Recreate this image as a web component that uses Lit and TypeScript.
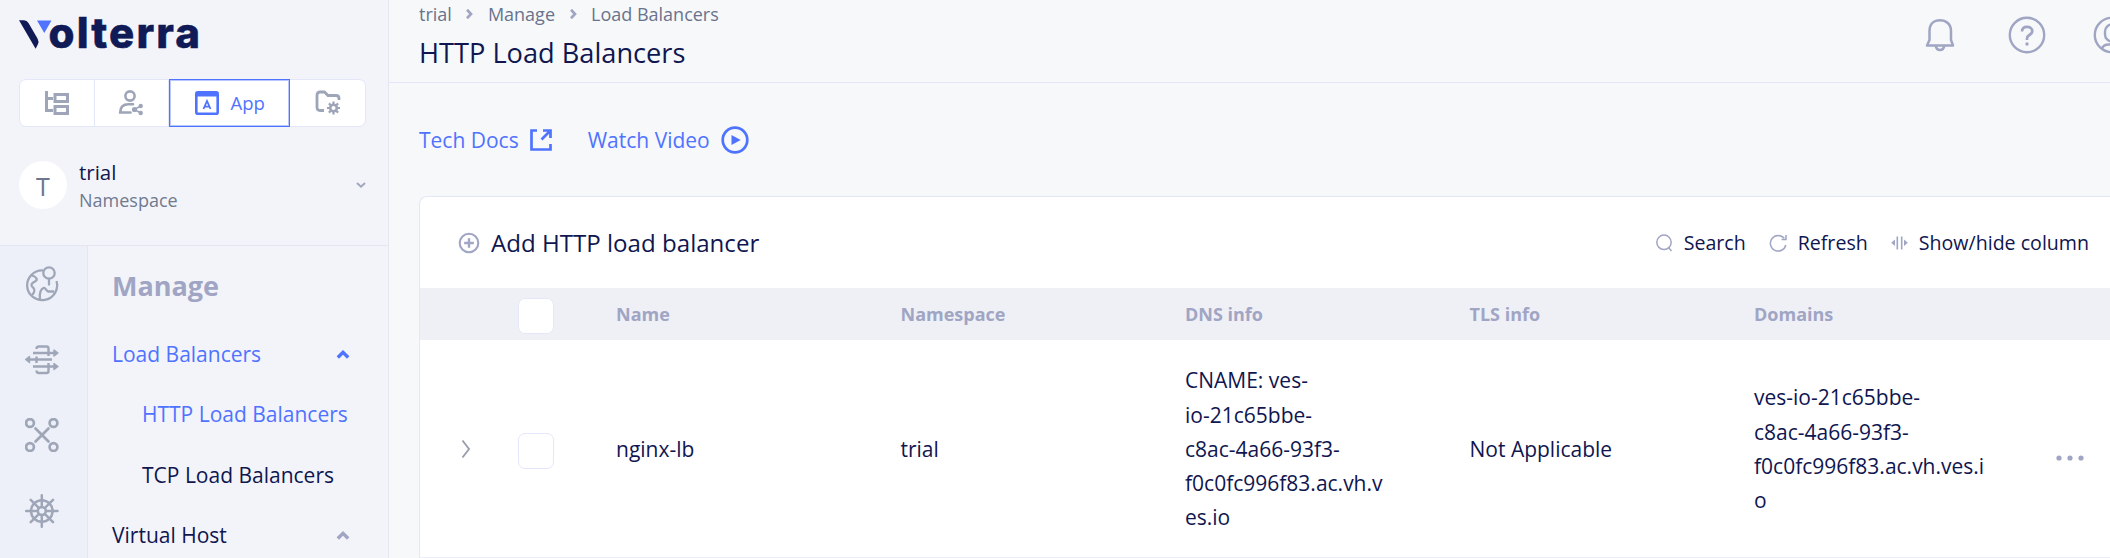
import { LitElement, html, css, svg } from "lit";
import { customElement } from "lit/decorators.js";

const icon = (w: number, h: number, body: unknown, cls = "") =>
  html`<svg class="ic ${cls}" width=${w} height=${h} viewBox="0 0 ${w} ${h}" fill="none" stroke="currentColor">${body}</svg>`;

const logo = html`<svg class="logo" width="184" height="36" viewBox="0 0 184 36">
  <path d="M0 4.300H5Q8 4.300 9.500 7L18.500 22.500Q20.300 25.500 18.800 28.500L16.600 32.800Z" fill="#101a56"></path>
  <path d="M18 4.500H32.500L25.300 17Z" fill="#4f73ff"></path>
  <text x="29.500" y="32" textLength="151.500" lengthAdjust="spacing" font-family="Inter, sans-serif" font-weight="800" font-size="42" fill="#101a56" stroke="#101a56" stroke-width="0.500">olterra</text>
</svg>`;

const icons = {
  tree: icon(26, 26, svg`<g stroke-width="3"><path d="M2.500 1V20.500H9M2.500 8.500H9"/><rect x="11" y="4.500" width="12.500" height="7"/><rect x="11" y="16.500" width="12.500" height="7"/></g>`),
  user: icon(26, 26, svg`<g stroke-width="2.600"><circle cx="12" cy="6" r="4.600"/><path d="M12.500 22.500H2.200C2.200 16.500 6 14.300 10.500 14.300H15" stroke-linecap="round"/><path d="M16 19.500L23 16M16 19.500L23 23" stroke-width="1.500"/></g><g fill="currentColor" stroke="none"><circle cx="16.500" cy="19.500" r="2.600"/><circle cx="22.700" cy="16" r="2.200"/><circle cx="22.700" cy="23" r="2.200"/></g>`),
  app: icon(24, 24, svg`<rect x="1.300" y="1.300" width="21.400" height="21.400" rx="1.500" stroke-width="2.600"/><path d="M1 3.500H23" stroke-width="4"/><path d="M8.500 18L12 10L15.500 18M9.800 15.700H14.200" stroke-width="1.800"/>`),
  folder: icon(26, 26, svg`<path d="M9 20.500H5Q2 20.500 2 17.500V5Q2 2 5 2H9.500L13 5.500H21Q24 5.500 24 8.500V10" stroke-width="2.800"/><circle cx="18.500" cy="18" r="3.300" stroke-width="2.600"/><path d="M18.500 11.500V14M18.500 22V24.500M12 18H14.500M22.500 18H25M13.900 13.400L15.700 15.200M21.300 20.800L23.100 22.600M23.100 13.400L21.300 15.200M15.700 20.800L13.900 22.600" stroke-width="2.200"/>`),
  globe: icon(34, 36, svg`<g stroke-width="2.300"><path d="M18 4.500A15 14.800 0 1 0 31.500 15"/><circle cx="24" cy="7" r="5.700"/><path d="M24 13V18.500" stroke-linecap="round"/><path d="M7 9.500C12 11 13 14 10 15.500C5 18 6 20 8.500 22C10.500 24 9 27 7 29"/><path d="M15 33C14 27 16 23 18.500 22C21 21.500 21 25 23.500 25.500H29"/></g>`),
  arrows: icon(34, 30, svg`<g stroke-width="2.400"><path d="M11.500 4Q11.500 1.500 14 1.500H21.500Q23.500 1.500 23.500 3.500V11M8 8H29M5 14.500H27M8 21.500H29M23.500 18V26Q23.500 28 21.500 28H14Q11.500 28 11.500 25.500M11.500 11.500V18"/></g><g fill="currentColor" stroke-width="1.400" stroke-linejoin="round"><path d="M29 5L33 8L29 11Z"/><path d="M29 18.500L33 21.500L29 24.500Z"/><path d="M4.500 11.500L.700 14.500L4.500 17.500Z"/></g>`),
  mesh: icon(34, 34, svg`<g stroke-width="2.700"><circle cx="5" cy="5" r="3.900"/><circle cx="28.500" cy="5" r="3.900"/><circle cx="5" cy="29" r="3.900"/><circle cx="28.500" cy="29" r="3.900"/><path d="M10.500 10.500L23.500 23.500M23.500 10.500L10.500 23.500" stroke-linecap="round"/></g>`),
  helm: icon(34, 34, svg`<g stroke-width="2.500" stroke-linecap="round"><circle cx="16.800" cy="17" r="10.800"/><circle cx="16.800" cy="17" r="4"/><path d="M16.800 1.200V13M16.800 21V32.800M1.200 17H13M21 17H32.500M5.700 5.900L14 14.200M19.700 19.900L28 28.200M28 5.900L19.700 14.200M14 19.900L5.700 28.200"/></g>`),
  chevUp: icon(14, 10, svg`<path d="M1.800 8.500L7 3.300L12.200 8.500" stroke-width="3.400"/>`),
  chevDown: icon(10, 8, svg`<path d="M1 2L5 5.800L9 2" stroke-width="1.900"/>`),
  crumb: icon(7, 10, svg`<path d="M1 .8L5 5L1 9.200" stroke-width="2.700"/>`),
  ext: icon(22, 22, svg`<path d="M7 1.500H1.500V20.500H20.500V15" stroke-width="2.700"/><path d="M11.500 10.500L19.500 2.500M13 1.500H20.500V9" stroke-width="2.700"/>`),
  play: icon(28, 28, svg`<circle cx="14" cy="14" r="12.300" stroke-width="2.700"/><path d="M10.500 9L19.700 14L10.500 19Z" fill="currentColor" stroke="none"/>`),
  plus: icon(22, 22, svg`<circle cx="11" cy="11" r="9.300" stroke-width="2.100"/><path d="M11 6.200V15.800M6.200 11H15.800" stroke-width="2.400"/>`),
  search: icon(17, 18, svg`<circle cx="8" cy="8.300" r="7.200" stroke-width="1.500"/><path d="M12.500 13.500L15.500 17" stroke-width="1.500"/>`),
  refresh: icon(18, 18, svg`<path d="M15.200 4.300A7.800 7.800 0 1 0 16.800 11" stroke-width="1.500"/><path d="M17 1V5.500H12.500" stroke-width="1.500"/>`),
  cols: icon(17, 14, svg`<g stroke-width="1.600"><path d="M6.300 .5V13.500M10.700 .5V13.500"/></g><g fill="currentColor" stroke="none"><path d="M4 3.500V10L.200 6.800Z"/><path d="M13 3.500V10L16.800 6.800Z"/></g>`),
  bell: icon(30, 34, svg`<g stroke-width="2.500" stroke-linejoin="round"><path d="M2 27.500H28L26 22V13C26 6 21 2.300 15 2.300S4.500 6 4.500 13V22Z"/><path d="M10.800 28C11.500 33.200 18.500 33.200 19.200 28"/></g>`, "bell"),
  help: icon(38, 38, svg`<circle cx="19" cy="19" r="17.200" stroke-width="2.400"/><path d="M14 15.500C14.200 12.300 16.200 10.900 19 10.900C22 10.900 24.300 12.600 24.300 15.300C24.300 19 19 18.500 19 22.500V24" stroke-width="2.700"/><circle cx="19" cy="28" r="1.700" fill="currentColor" stroke="none"/>`, "help"),
  person: icon(38, 38, svg`<circle cx="19" cy="19" r="17.200" stroke-width="2.400"/><rect x="12" y="8.500" width="14" height="17" rx="7" stroke-width="2.400"/><path d="M9 33C9.500 30 12 28.800 15 28.500H23C26 28.800 28.500 30 29 33" stroke-width="2.400"/>`),
  next: icon(10, 20, svg`<path d="M1.500 1.500L8 10L1.500 18.500" stroke-width="1.900"/>`),
  dots: icon(28, 6, svg`<g fill="currentColor" stroke="none"><circle cx="3" cy="3" r="2.600"/><circle cx="14" cy="3" r="2.600"/><circle cx="25" cy="3" r="2.600"/></g>`),
};

@customElement("app-root")
export class AppRoot extends LitElement {
  static styles = css`
    :host { display: grid; grid-template-columns: 388px 1fr; width: 2110px; height: 558px; overflow: hidden; background: #f7f8fa; color: #0f1650; font: 21px/34.300px "Open Sans", sans-serif; }
    * { box-sizing: border-box; }
    svg { display: block; flex: none; }
    .logo { overflow: visible; }
    .side { display: flex; flex-direction: column; background: #f3f4f9; border-right: 1px solid #e4e6f2; width: 389px; height: 558px; }
    .top { height: 245px; padding: 16px 22px 0 19px; flex: none; }
    .tabs { display: flex; margin-top: 27px; height: 48px; background: #fff; border: 1px solid #e4e7f7; border-radius: 7px; color: #9ea5b8; }
    .tab { display: flex; align-items: center; justify-content: center; width: 75px; border-right: 1px solid #e4e7f7; }
    .tab:last-child { border: 0; }
    .tab.on { width: 122px; margin: -1px 0; border: 1px solid #4f73ff; box-shadow: inset 0 0 0 1px #4f73ff66; color: #4f73ff; gap: 12px; font-size: 18.500px; }
    .ns { display: flex; align-items: center; margin-top: 30px; height: 56px; color: #a0a6bb; }
    .av { width: 48px; height: 48px; border-radius: 50%; background: #fff; color: #6c7690; font-size: 25px; line-height: 50px; text-align: center; margin-right: 12px; }
    .nst { flex: 1; padding-top: 2px; font-size: 20.500px; line-height: 28px; color: #0f1650; }
    .nst small { display: block; font-size: 18px; color: #6f7a91; }
    .body { display: flex; flex: 1; border-top: 1px solid #e4e6f2; }
    .rail { width: 88px; background: #edf0f8; border-right: 1px solid #e4e6f2; display: flex; flex-direction: column; align-items: center; color: #9ea6b8; padding-right: 4px; }
    .rail .cell { flex: none; height: 75.700px; display: flex; align-items: center; }
    .nav { flex: 1; padding: 23px 38px 0 24px; white-space: nowrap; }
    h2 { margin: 0 0 21px; font-size: 27px; line-height: 34px; color: #a0a5c4; }
    .item { display: flex; justify-content: space-between; align-items: center; height: 60.300px; }
    .item.sub { padding-left: 30px; }
    .blue { color: #4f73ff; }
    .mut { color: #a0a5c4; }
    .main { min-width: 0; display: flex; flex-direction: column; }
    .head { display: flex; justify-content: space-between; height: 83px; flex: none; border-bottom: 1px solid #e4e5f8; padding-left: 30px; margin-left: 1px; }
    .crumbs { display: flex; align-items: center; height: 28px; font-size: 18px; color: #69738c; }
    .crumbs svg { margin: 0 14.500px; color: #a0a5c4; }
    h1 { margin: 6px 0 0; font-size: 27.200px; line-height: 38px; font-weight: 400; }
    .acts { display: flex; align-items: center; height: 69px; color: #a0a5c4; width: 185.200px; }
    .bell { margin-right: 53.500px; }
    .help { margin-right: 46.500px; }
    .links { display: flex; align-items: center; height: 113px; padding: 1px 0 0 31px; color: #4f73ff; }
    .links svg { margin: 0 36px 0 11px; }
    .card { flex: 1; margin-left: 31px; background: #fff; border: 1px solid #e4e7f7; border-width: 1px 0 0 1px; border-radius: 8px 0 0 0; }
    .bar { display: flex; align-items: center; height: 91px; padding: 2px 21px 0 38px; }
    .add { display: flex; align-items: center; gap: 11px; flex: 1; font-size: 24.100px; }
    .bar svg { color: #a0a5c4; }
    .tool { display: flex; align-items: center; gap: 11px; margin-left: 23px; font-size: 19.600px; }
    .row { display: grid; grid-template-columns: 98px 98px repeat(4, 284.500px) 250px 1fr; align-items: center; }
    .row.hd { height: 52px; background: #eff0f6; color: #a0a5c4; font-weight: 700; font-size: 18px; }
    .row.data { height: 218px; border-bottom: 1px solid #eceefa; padding-top: 1px; }
    .box { width: 36px; height: 36px; background: #fff; border: 1px solid #e4e7f9; border-radius: 7px; margin-top: 4px; }
    .exp { padding-left: 41px; color: #9a9fae; }
    .more { padding-top: 17px; color: #a0a5c4; justify-self: end; margin-right: 26px; }
  `;

  render() {
    return html`
      <aside class="side">
        <div class="top">
          ${logo}
          <div class="tabs">
            <div class="tab">${icons.tree}</div>
            <div class="tab">${icons.user}</div>
            <div class="tab on">${icons.app}<span>App</span></div>
            <div class="tab">${icons.folder}</div>
          </div>
          <div class="ns"><div class="av">T</div><div class="nst">trial<small>Namespace</small></div>${icons.chevDown}</div>
        </div>
        <div class="body">
          <div class="rail">
            ${[icons.globe, icons.arrows, icons.mesh, icons.helm].map((i) => html`<div class="cell">${i}</div>`)}
          </div>
          <nav class="nav">
            <h2>Manage</h2>
            <div class="item blue"><span>Load Balancers</span>${icons.chevUp}</div>
            <div class="item sub blue">HTTP Load Balancers</div>
            <div class="item sub">TCP Load Balancers</div>
            <div class="item"><span>Virtual Host</span><span class="mut">${icons.chevUp}</span></div>
          </nav>
        </div>
      </aside>
      <main class="main">
        <header class="head">
          <div>
            <div class="crumbs">trial${icons.crumb}Manage${icons.crumb}Load Balancers</div>
            <h1>HTTP Load Balancers</h1>
          </div>
          <div class="acts">${icons.bell}${icons.help}${icons.person}</div>
        </header>
        <div class="links">Tech Docs${icons.ext}Watch Video${icons.play}</div>
        <section class="card">
          <div class="bar">
            <div class="add">${icons.plus}Add HTTP load balancer</div>
            <div class="tool">${icons.search}Search</div>
            <div class="tool">${icons.refresh}Refresh</div>
            <div class="tool">${icons.cols}Show/hide column</div>
          </div>
          <div class="row hd">
            <span></span><div class="box"></div>
            ${["Name", "Namespace", "DNS info", "TLS info", "Domains"].map((t) => html`<span>${t}</span>`)}
          </div>
          <div class="row data">
            <span class="exp">${icons.next}</span><div class="box"></div>
            <span>nginx-lb</span><span>trial</span>
            <div>CNAME: ves-<br>io-21c65bbe-<br>c8ac-4a66-93f3-<br>f0c0fc996f83.ac.vh.v<br>es.io</div>
            <span>Not Applicable</span>
            <div>ves-io-21c65bbe-<br>c8ac-4a66-93f3-<br>f0c0fc996f83.ac.vh.ves.i<br>o</div>
            <span class="more">${icons.dots}</span>
          </div>
        </section>
      </main>
    `;
  }
}
